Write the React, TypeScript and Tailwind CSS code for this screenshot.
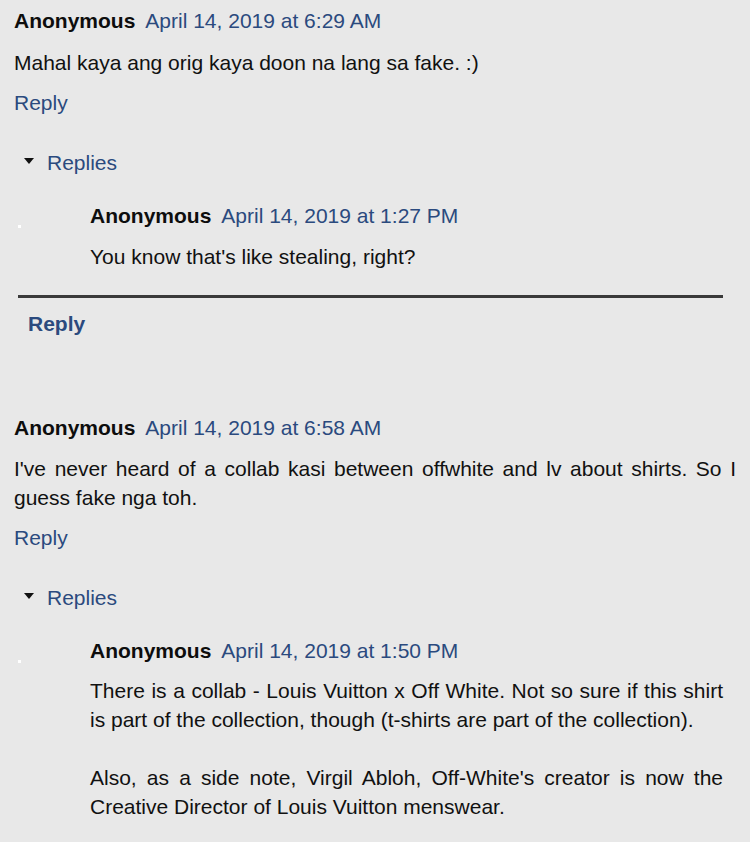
import React from "react";

const blue = "text-[#2b4a7e]";

function Header({ date }: { date: string }) {
  return (
    <div className="flex h-[29px] items-center gap-[10px] leading-[29px]">
      <span className="font-bold text-[#0d0d0d]">Anonymous</span>
      <span className={blue}>{date}</span>
    </div>
  );
}

function Replies() {
  return (
    <div className="ml-[24px] flex h-[29px] items-center gap-[13px] leading-[29px]">
      <svg width="10" height="6" viewBox="0 0 10 6" className="mb-[4px]">
        <polygon points="0,0 10,0 5,6" fill="#111" />
      </svg>
      <span className={blue}>Replies</span>
    </div>
  );
}

export default function App() {
  return (
    <div
      className="min-h-[842px] w-[750px] bg-[#e8e8e8] text-[21px] text-[#111]"
      style={{ fontFamily: '"Liberation Sans", Arial, sans-serif' }}
    >
      <div className="pl-[14px] pt-[6px]">
        <Header date="April 14, 2019 at 6:29 AM" />
        <p className="mt-[13px] leading-[29px]">Mahal kaya ang orig kaya doon na lang sa fake. :)</p>
        <div className={`mt-[11px] leading-[29px] ${blue}`}>Reply</div>
        <div className="mt-[31px] -ml-[14px]">
          <Replies />
        </div>
        <div className="relative mt-[24px] -ml-[14px]">
          <div className="absolute left-[18px] top-[24px] h-[3px] w-[3px] bg-white" />
          <div className="pl-[90px] pr-[27px]">
            <Header date="April 14, 2019 at 1:27 PM" />
            <p className="mt-[12px] leading-[29px]">You know that&apos;s like stealing, right?</p>
          </div>
        </div>
        <div className="ml-[4px] mr-[27px] mt-[24px] h-[3px] bg-[#3a3a3a]" />
        <div className={`ml-[14px] mt-[11px] font-bold leading-[29px] ${blue}`}>Reply</div>
      </div>

      <div className="pl-[14px] pr-[14px] pt-[75px]">
        <Header date="April 14, 2019 at 6:58 AM" />
        <p className="mt-[12px] text-justify leading-[29px]">
          I&apos;ve never heard of a collab kasi between offwhite and lv about shirts. So I guess fake nga toh.
        </p>
        <div className={`mt-[11px] leading-[29px] ${blue}`}>Reply</div>
        <div className="mt-[31px] -ml-[14px]">
          <Replies />
        </div>
        <div className="relative mt-[24px] -ml-[14px]">
          <div className="absolute left-[18px] top-[24px] h-[3px] w-[3px] bg-white" />
          <div className="pl-[90px] pr-[13px]">
            <Header date="April 14, 2019 at 1:50 PM" />
            <p className="mt-[11px] text-justify leading-[29px]">
              There is a collab - Louis Vuitton x Off White. Not so sure if this shirt is part of the collection, though (t-shirts are part of the collection).
            </p>
            <p className="mt-[29px] text-justify leading-[29px]">
              Also, as a side note, Virgil Abloh, Off-White&apos;s creator is now the Creative Director of Louis Vuitton menswear.
            </p>
          </div>
        </div>
      </div>
    </div>
  );
}
